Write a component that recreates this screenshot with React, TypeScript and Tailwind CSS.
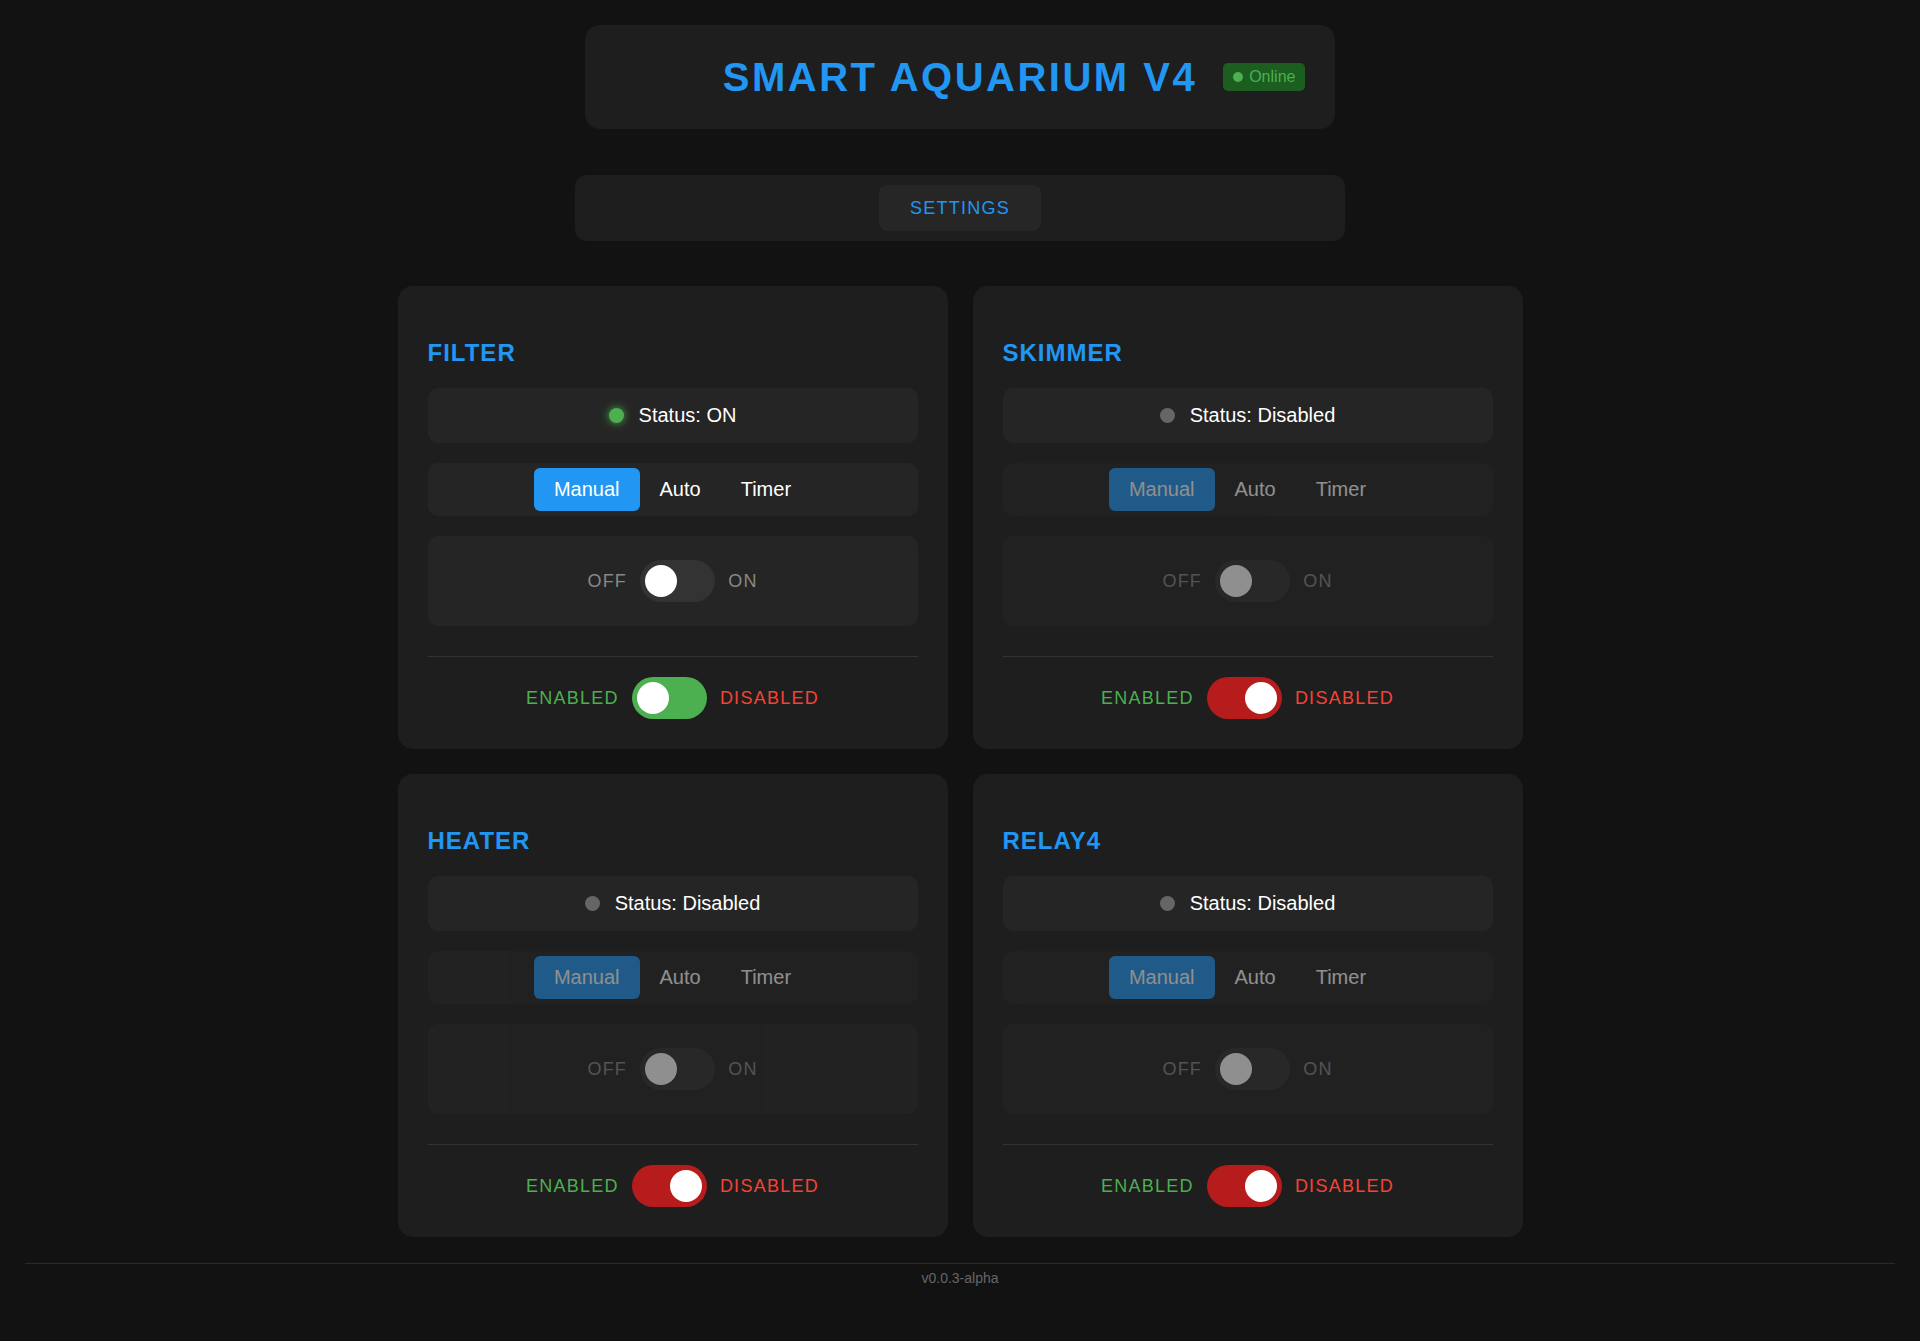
import React from "react";

type Relay = {
  name: string;
  enabled: boolean;
  on: boolean;
};

const relays: Relay[] = [
  { name: "FILTER", enabled: true, on: true },
  { name: "SKIMMER", enabled: false, on: false },
  { name: "HEATER", enabled: false, on: false },
  { name: "RELAY4", enabled: false, on: false },
];

const Toggle = ({ right, track, knob }: { right: boolean; track: string; knob: string }) => (
  <div
    className={`flex h-[42px] w-[75px] items-center rounded-full p-[5px] ${track} ${
      right ? "justify-end" : "justify-start"
    }`}
  >
    <div className={`size-[32px] rounded-full ${knob}`} />
  </div>
);

const RelayCard = ({ relay }: { relay: Relay }) => {
  const dim = relay.enabled ? "" : "opacity-50";

  return (
    <div className="rounded-[15px] bg-[#1e1e1e] p-[30px]">
      {/* Title */}
      <h2 className="mt-[23px] mb-[21px] text-[24px] font-bold leading-[28px] tracking-[1px] text-[#2196f3]">
        {relay.name}
      </h2>

      {/* Status */}
      <div className="flex items-center justify-center gap-[15px] rounded-[10px] bg-[#252525] py-4">
        <span
          className={`size-[15px] rounded-full ${
            relay.on ? "bg-[#4caf50] shadow-[0_0_8px_#4caf50]" : "bg-[#666666]"
          }`}
        />
        <span className="text-[20px] leading-[23px] text-white">
          Status: {relay.enabled ? (relay.on ? "ON" : "OFF") : "Disabled"}
        </span>
      </div>

      {/* Mode selector */}
      <div className={`mt-5 flex justify-center rounded-[10px] bg-[#252525] p-[5px] ${dim}`}>
        <button className="rounded-[6px] bg-[#2196f3] px-5 py-[10px] text-[20px] leading-[23px] text-white">
          Manual
        </button>
        <button className="rounded-[6px] px-5 py-[10px] text-[20px] leading-[23px] text-white">
          Auto
        </button>
        <button className="rounded-[6px] px-5 py-[10px] text-[20px] leading-[23px] text-white">
          Timer
        </button>
      </div>

      {/* Manual control */}
      <div
        className={`mt-5 flex items-center justify-center gap-[13px] rounded-[10px] bg-[#252525] py-6 ${dim}`}
      >
        <span className="text-[18px] leading-[21px] tracking-[1.25px] text-[#888888]">OFF</span>
        <Toggle right={relay.on && false} track="bg-[#333333]" knob="bg-white" />
        <span className="text-[18px] leading-[21px] tracking-[1.25px] text-[#888888]">ON</span>
      </div>

      {/* Enable switch */}
      <div className="mt-[30px] flex items-center justify-center gap-[13px] border-t border-[#333333] pt-5">
        <span className="text-[18px] leading-[21px] tracking-[1.25px] text-[#4caf50]">ENABLED</span>
        <Toggle
          right={!relay.enabled}
          track={relay.enabled ? "bg-[#4caf50]" : "bg-[#b71c1c]"}
          knob="bg-white"
        />
        <span className="text-[18px] leading-[21px] tracking-[1.25px] text-[#f44336]">DISABLED</span>
      </div>
    </div>
  );
};

export default function App() {
  return (
    <div className="min-h-screen bg-[#121212] p-[25px] font-['Liberation_Sans',Arial,sans-serif]">
      {/* Header */}
      <header className="mx-auto flex w-[750px] justify-center rounded-[15px] bg-[#1e1e1e] py-[29px]">
        <div className="relative">
          <h1 className="text-[40px] font-bold leading-[46px] tracking-[2.5px] text-[#2196f3]">
            SMART AQUARIUM V4
          </h1>
          <span className="absolute left-full top-1/2 ml-[26px] flex -translate-y-1/2 items-center gap-[6px] whitespace-nowrap rounded-[5px] bg-[#1b5e20] px-[10px] py-[5px] text-[16px] leading-[18px] text-[#4caf50]">
            <span className="size-[10px] rounded-full bg-[#4caf50]" />
            Online
          </span>
        </div>
      </header>

      {/* Nav */}
      <nav className="mx-auto mt-[46px] flex w-[770px] justify-center rounded-[12px] bg-[#1e1e1e] py-[10px]">
        <button className="rounded-[8px] bg-[#262626] px-[31px] py-[12px] text-[18px] leading-[22px] tracking-[1.25px] text-[#2196f3]">
          SETTINGS
        </button>
      </nav>

      {/* Relays */}
      <main className="mx-auto mt-[45px] grid w-[1125px] grid-cols-2 gap-[25px]">
        {relays.map((relay) => (
          <RelayCard key={relay.name} relay={relay} />
        ))}
      </main>

      <footer className="mt-[26px] border-t border-[#2a2a2a] pt-[6px] text-center text-[14px] leading-[16px] text-[#666666]">
        v0.0.3-alpha
      </footer>
    </div>
  );
}
